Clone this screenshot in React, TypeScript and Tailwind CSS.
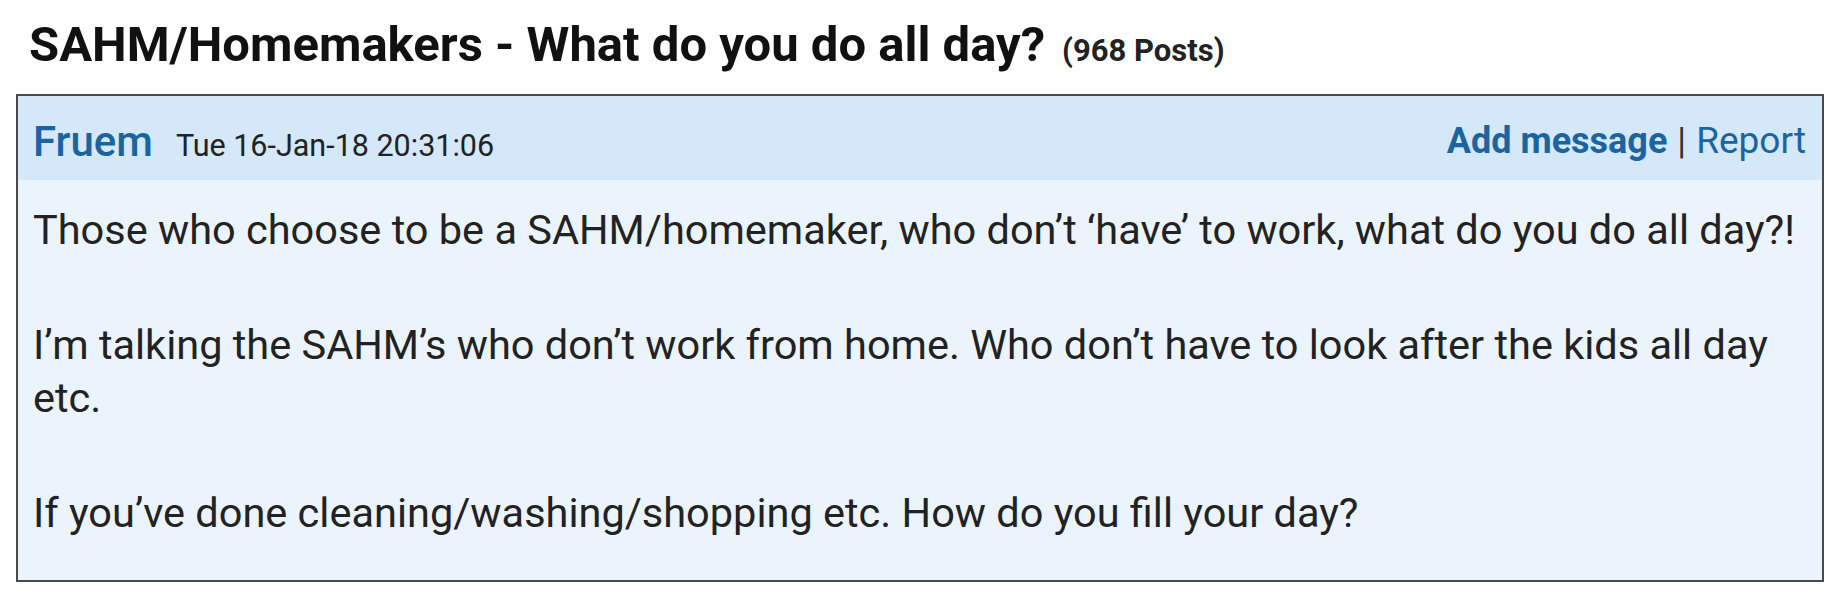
import React from "react";

export default function App() {
  return (
    <div className="w-[1844px] h-[600px] bg-white font-['Roboto','Liberation_Sans',sans-serif]">
      <div className="pl-[29px] h-[94px] flex items-baseline gap-[17px]">
        <h1 className="text-[49px] leading-[90px] font-bold text-[#111]">
          SAHM/Homemakers - What do you do all day?
        </h1>
        <span className="text-[31px] font-bold text-[#222]">(968 Posts)</span>
      </div>
      <div className="ml-[16px] mr-[20px] border-2 border-[#4a4a4a] bg-[#ebf4fd]">
        <div className="h-[84px] bg-[#d4e8fa] flex items-center justify-between pl-[15px] pr-[16px]">
          <div className="flex items-baseline gap-[23px] pt-[6px]">
            <span className="text-[42px] font-medium text-[#1a64a0]">Fruem</span>
            <span className="text-[30.5px] text-[#222]">Tue 16-Jan-18 20:31:06</span>
          </div>
          <div className="flex items-baseline gap-[10px] pt-[6px] text-[36px] text-[#1a64a0]">
            <span className="font-bold">Add message</span>
            <span className="text-[#333]">|</span>
            <span className="text-[37px]">Report</span>
          </div>
        </div>
        <div className="pl-[15px] pr-[16px] pt-[23px] pb-[41px] text-[41.5px] leading-[53px] text-[#222] flex flex-col gap-[62px]">
          <p>Those who choose to be a SAHM/homemaker, who don’t ‘have’ to work, what do you do all day?!</p>
          <p>I’m talking the SAHM’s who don’t work from home. Who don’t have to look after the kids all day etc.</p>
          <p>If you’ve done cleaning/washing/shopping etc. How do you fill your day?</p>
        </div>
      </div>
    </div>
  );
}
